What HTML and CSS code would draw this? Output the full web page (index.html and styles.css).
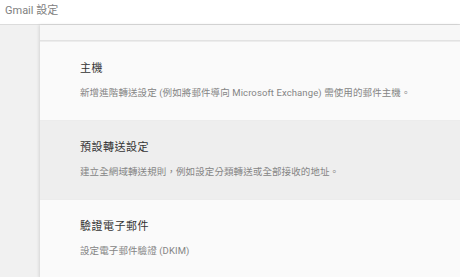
FILE: index.html
```html
<!DOCTYPE html>
<html lang="zh-Hant">
<head>
    <meta charset="UTF-8">
    <title>Gmail 設定</title>
    <link rel="stylesheet" href="styles.css">
</head>
<body>
    <!-- Header -->
    <div class="header">Gmail 設定</div>

    <div class="page">
        <div class="side"></div>

        <!-- Settings panel -->
        <div class="panel">
            <div class="panel-top"></div>

            <div class="setting">
                <div class="setting-title">主機</div>
                <div class="setting-desc">新增進階轉送設定 (例如將郵件導向 Microsoft Exchange) 需使用的郵件主機。</div>
            </div>

            <div class="setting active">
                <div class="setting-title">預設轉送設定</div>
                <div class="setting-desc">建立全網域轉送規則，例如設定分類轉送或全部接收的地址。</div>
            </div>

            <div class="setting">
                <div class="setting-title">驗證電子郵件</div>
                <div class="setting-desc">設定電子郵件驗證 (DKIM)</div>
            </div>
        </div>
    </div>
</body>
</html>
```

FILE: styles.css
```css
body {
    margin: 0;
    font-family: Roboto, "Noto Sans CJK TC", sans-serif;
    background-color: #f1f1f1;
    overflow: hidden;
}

/* Header */
.header {
    height: 24px;
    line-height: 22px;
    padding-left: 5px;
    font-size: 11px;
    color: #808080;
    background-color: #fff;
    border-bottom: 1px solid #dcdcdc;
}

.page {
    display: flex;
}

.side {
    width: 40px;
    flex-shrink: 0;
}

/* Panel */
.panel {
    flex: 1;
    background-color: #fafafa;
    box-shadow: -1px 0 3px rgba(0, 0, 0, 0.12);
}

.panel-top {
    height: 15px;
    background-color: #f7f7f7;
    border-bottom: 1px solid #e2e2e2;
}

.setting {
    padding: 20px 40px 20px 40px;
    border-top: 1px solid #ececec;
}

.setting:first-of-type {
    border-top: none;
}

.setting.active {
    background-color: #eeeeee;
}

.setting-title {
    font-size: 11px;
    line-height: 14px;
    color: #333;
    letter-spacing: 0.5px;
}

.setting-desc {
    margin-top: 10px;
    font-size: 9.5px;
    line-height: 14px;
    color: #858585;
    letter-spacing: 0.1px;
}
```
